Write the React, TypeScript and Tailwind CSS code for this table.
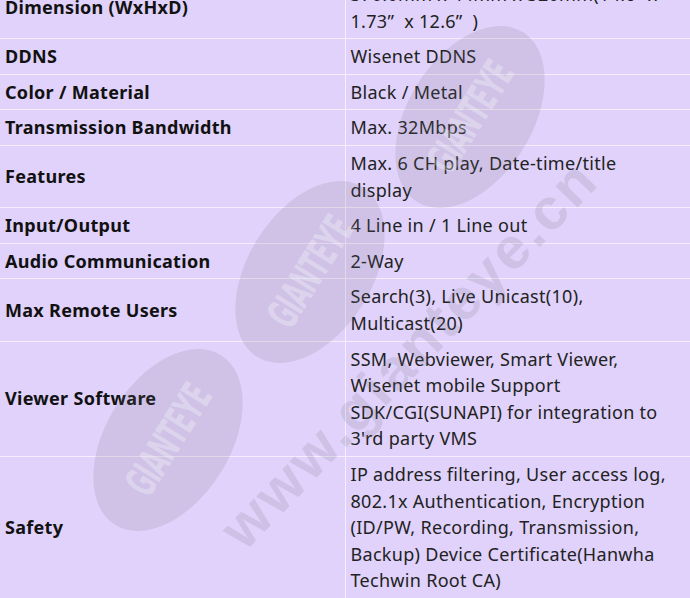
import React from 'react';

type Spec = { label: string; value: React.ReactNode };

const specs: Spec[] = [
  {
    label: 'Dimension (WxHxD)',
    value: (
      <>
        370.0mm x 44mm x 320mm(14.6” x
        <br />
        1.73”{'\u00a0\u00a0'}x 12.6”{'\u00a0\u00a0'})
      </>
    ),
  },
  { label: 'DDNS', value: 'Wisenet DDNS' },
  { label: 'Color / Material', value: 'Black / Metal' },
  { label: 'Transmission Bandwidth', value: 'Max. 32Mbps' },
  {
    label: 'Features',
    value: (
      <>
        Max. 6 CH play, Date-time/title
        <br />
        display
      </>
    ),
  },
  { label: 'Input/Output', value: '4 Line in / 1 Line out' },
  { label: 'Audio Communication', value: '2-Way' },
  {
    label: 'Max Remote Users',
    value: (
      <>
        Search(3), Live Unicast(10),
        <br />
        Multicast(20)
      </>
    ),
  },
  {
    label: 'Viewer Software',
    value: (
      <>
        SSM, Webviewer, Smart Viewer,
        <br />
        Wisenet mobile Support
        <br />
        SDK/CGI(SUNAPI) for integration to
        <br />
        3'rd party VMS
      </>
    ),
  },
  {
    label: 'Safety',
    value: (
      <>
        IP address filtering, User access log,
        <br />
        802.1x Authentication, Encryption
        <br />
        (ID/PW, Recording, Transmission,
        <br />
        Backup) Device Certificate(Hanwha
        <br />
        Techwin Root CA)
      </>
    ),
  },
];

// watermark badge: grey oval with the brand name inside
const Badge = ({ className }: { className: string }) => (
  <div
    className={`absolute w-[200px] h-[124px] rounded-[50%] bg-[rgba(120,110,130,0.16)] rotate-[-58deg] flex items-center justify-center ${className}`}
  >
    <span className="text-[34px] font-bold tracking-[-1px] text-[rgba(255,255,255,0.28)] scale-x-[0.75] scale-y-[1.25] [font-family:'DejaVu_Sans_Condensed','DejaVu_Sans',sans-serif]">
      GIANTEYE
    </span>
  </div>
);

export default function App() {
  return (
    <div className="relative w-[690px] h-[598px] overflow-hidden bg-[#e0d2fa] [font-family:'Noto_Sans','Open_Sans',sans-serif]">
      <table className="w-[690px] table-fixed border-collapse mt-[-23px] text-[18px] leading-[26.6px] tracking-[0.3px]">
        <tbody>
          {specs.map((s) => (
            <tr key={s.label} className="border-b border-[#f4eefe]">
              <td className="w-[345px] border-r border-[#f4eefe] px-[5px] py-[4px] align-middle font-bold text-[#111111]">
                {s.label}
              </td>
              <td className="px-[5px] py-[4px] align-middle text-[#222222]">{s.value}</td>
            </tr>
          ))}
        </tbody>
      </table>

      {/* watermark overlay */}
      <div className="pointer-events-none absolute inset-0">
        <Badge className="left-[370px] top-[55px]" />
        <Badge className="left-[210px] top-[210px]" />
        <Badge className="left-[68px] top-[378px]" />
        <div className="absolute left-[108px] top-[318px] w-[600px] h-[70px] flex items-center justify-center rotate-[-46deg]">
          <span className="text-[58px] font-bold tracking-[3px] text-[rgba(120,110,130,0.17)] [font-family:'Liberation_Sans',sans-serif]">
            www.gianteye.cn
          </span>
        </div>
      </div>
    </div>
  );
}
